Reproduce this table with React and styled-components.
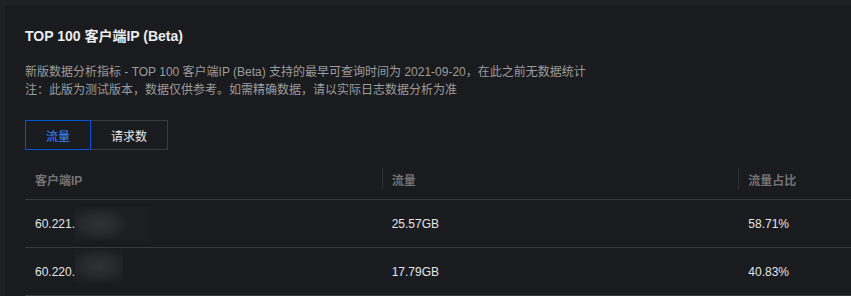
import React from "react";
import styled, { createGlobalStyle } from "styled-components";

const Global = createGlobalStyle`
  html, body {
    margin: 0;
    padding: 0;
    overflow: hidden;
    background: #202124;
  }
  body {
    font-family: "Liberation Sans", Arial, "Noto Sans CJK SC", sans-serif;
  }
`;

const Page = styled.div`
  padding: 5px 0 0 5px;
`;

const Card = styled.div`
  width: 1110px;
  min-height: 300px;
  background: #1a1b1e;
  padding: 20px 20px 0 20px;
  box-sizing: border-box;
`;

const Title = styled.h3`
  margin: 0;
  font-size: 14px;
  line-height: 22px;
  font-weight: bold;
  color: #ececec;
`;

const Desc = styled.p`
  margin: 16px 0 0;
  font-size: 12px;
  line-height: 18px;
  color: #9c9c9c;
`;

const Tabs = styled.div`
  display: flex;
  margin-top: 21px;
`;

const Tab = styled.button`
  position: relative;
  height: 30px;
  padding: 0 20px;
  margin: 0 0 0 ${(p) => (p.$first ? "0" : "-1px")};
  background: transparent;
  border: 1px solid ${(p) => (p.$active ? "#0052d9" : "#3b3b3d")};
  z-index: ${(p) => (p.$active ? 1 : 0)};
  color: ${(p) => (p.$active ? "#3d84ff" : "#e6e6e6")};
  font-family: inherit;
  font-size: 12px;
  cursor: pointer;
`;

const Table = styled.div`
  margin-top: 10px;
  width: 1070px;
`;

const Row = styled.div`
  display: grid;
  grid-template-columns: repeat(3, 1fr);
  height: ${(p) => (p.$head ? "39px" : "47px")};
  border-bottom: 1px solid #3a3a3c;
`;

const Cell = styled.div`
  position: relative;
  display: flex;
  align-items: center;
  padding-left: 10px;
  font-size: 12px;
  color: ${(p) => (p.$head ? "#737375" : "#e4e4e4")};
  font-weight: ${(p) => (p.$head ? 700 : 400)};

  ${(p) =>
    p.$head && p.$divider
      ? `&::before {
    content: "";
    position: absolute;
    left: 0;
    top: 8px;
    width: 1px;
    height: 22px;
    background: #2e2f31;
  }`
      : ""}
`;

const Masked = styled.span`
  position: relative;
`;

const Blur = styled.span`
  position: absolute;
  left: 100%;
  top: ${(p) => p.$top}px;
  width: ${(p) => p.$w}px;
  height: 34px;
  background: radial-gradient(
    ellipse 30px 17px at 24px 50%,
    #303134 0%,
    #28292c 55%,
    #1d1e21 100%
  );
`;

const rows = [
  { ip: "60.221.", flow: "25.57GB", pct: "58.71%", top: -10, w: 75 },
  { ip: "60.220.", flow: "17.79GB", pct: "40.83%", top: -16, w: 48 },
];

export default function App() {
  return (
    <>
      <Global />
      <Page>
        <Card>
          <Title>TOP 100 客户端IP (Beta)</Title>
          <Desc>
            新版数据分析指标 - TOP 100 客户端IP (Beta) 支持的最早可查询时间为 2021-09-20，在此之前无数据统计
            <br />
            注：此版为测试版本，数据仅供参考。如需精确数据，请以实际日志数据分析为准
          </Desc>
          <Tabs>
            <Tab $first $active>
              流量
            </Tab>
            <Tab>请求数</Tab>
          </Tabs>
          <Table>
            <Row $head>
              <Cell $head>客户端IP</Cell>
              <Cell $head $divider>
                流量
              </Cell>
              <Cell $head $divider>
                流量占比
              </Cell>
            </Row>
            {rows.map((r) => (
              <Row key={r.ip}>
                <Cell>
                  <Masked>
                    {r.ip}
                    <Blur $top={r.top} $w={r.w} />
                  </Masked>
                </Cell>
                <Cell>{r.flow}</Cell>
                <Cell>{r.pct}</Cell>
              </Row>
            ))}
          </Table>
        </Card>
      </Page>
    </>
  );
}
